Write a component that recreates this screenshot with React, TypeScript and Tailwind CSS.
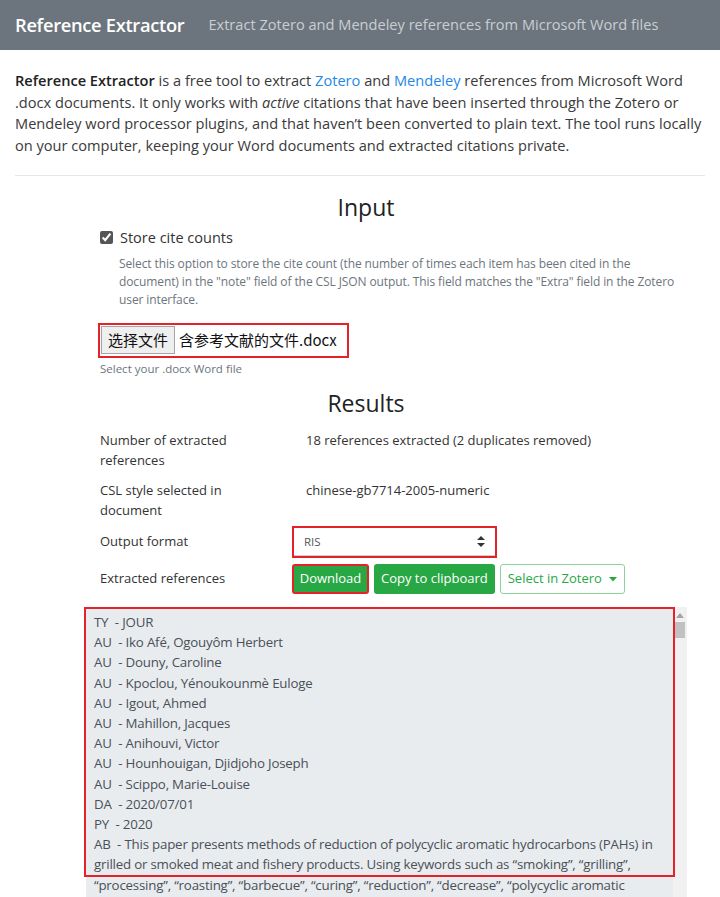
import React from "react";

const ris = [
  "TY  - JOUR",
  "AU  - Iko Afé, Ogouyôm Herbert",
  "AU  - Douny, Caroline",
  "AU  - Kpoclou, Yénoukounmè Euloge",
  "AU  - Igout, Ahmed",
  "AU  - Mahillon, Jacques",
  "AU  - Anihouvi, Victor",
  "AU  - Hounhouigan, Djidjoho Joseph",
  "AU  - Scippo, Marie-Louise",
  "DA  - 2020/07/01",
  "PY  - 2020",
  "AB  - This paper presents methods of reduction of polycyclic aromatic hydrocarbons (PAHs) in grilled or smoked meat and fishery products. Using keywords such as “smoking”, “grilling”, “processing”, “roasting”, “barbecue”, “curing”, “reduction”, “decrease”, “polycyclic aromatic hydrocarbons”, a literature search was performed.",
];

const Row: React.FC<{ label: string; children: React.ReactNode }> = ({ label, children }) => (
  <div className="flex items-start">
    <div className="w-[192px] shrink-0">
      <div className="max-w-[150px] text-[13px] leading-[20px] text-[#333]">{label}</div>
    </div>
    <div className="flex-1">{children}</div>
  </div>
);

export default function App() {
  return (
    <div className="min-h-screen bg-white font-['Open_Sans',sans-serif] text-[#212529]">
      <header className="h-[50px] bg-[#6c757d] flex items-center px-[15px]">
        <span className="text-white text-[18.3px] font-semibold tracking-[-0.3px]">Reference Extractor</span>
        <span className="ml-[24px] text-[#c9ced3] text-[14.6px]">
          Extract Zotero and Mendeley references from Microsoft Word files
        </span>
      </header>

      <main className="px-[15px]">
        <p className="pt-[20px] -mr-[10px] text-[14.6px] leading-[21.5px] text-[#3a3a3a]">
          <b className="font-semibold text-[#222]">Reference Extractor</b> is a free tool to extract{" "}
          <span className="text-[#1e88e5]">Zotero</span> and <span className="text-[#1e88e5]">Mendeley</span> references
          from Microsoft Word .docx documents. It only works with <i>active</i> citations that have been inserted through
          the Zotero or Mendeley word processor plugins, and that haven’t been converted to plain text. The tool runs
          locally on your computer, keeping your Word documents and extracted citations private.
        </p>
        <hr className="mt-[19px] border-[#e6e6e6]" />

        <h2 className="mt-[16px] pl-[12px] text-center text-[23px] leading-[30px] text-[#222]">Input</h2>

        <div className="pl-[85px] pr-[15px] mt-[5px]">
          <label className="flex items-center gap-[7px] text-[14.5px] text-[#333]">
            <input type="checkbox" defaultChecked className="w-[13px] h-[13px] accent-[#555]" />
            Store cite counts
          </label>
          <p className="ml-[19px] mt-[6px] text-[12px] leading-[18px] text-[#6c757d] tracking-[-0.1px]">
            Select this option to store the cite count (the number of times each item has been cited in the document) in
            the "note" field of the CSL JSON output. This field matches the "Extra" field in the Zotero user interface.
          </p>

          <div className="mt-[14px] ml-[-2px] w-[251px] h-[35px] border-2 border-[#e5222a] flex items-center pl-[1px]">
            <span className="h-[28px] px-[6px] flex items-center bg-[#efefef] border border-[#a5a5a5] text-[15px] font-['Noto_Sans_CJK_SC',sans-serif] text-[#111]">
              选择文件
            </span>
            <span className="ml-[4px] text-[15px] font-['Noto_Sans_CJK_SC',sans-serif] text-[#111] whitespace-nowrap">含参考文献的文件.docx</span>
          </div>
          <div className="mt-[2px] text-[11.5px] text-[#6c757d]">Select your .docx Word file</div>
        </div>

        <h2 className="mt-[11px] pl-[12px] text-center text-[23px] leading-[30px] text-[#222]">Results</h2>

        <div className="pl-[85px] pr-[15px]">
          <div className="mt-[12px] flex flex-col gap-[10px]">
            <Row label="Number of extracted references">
              <div className="pl-[14px] text-[13px] leading-[20px] text-[#333]">18 references extracted (2 duplicates removed)</div>
            </Row>
            <Row label="CSL style selected in document">
              <div className="pl-[14px] text-[13px] leading-[20px] text-[#333]">chinese-gb7714-2005-numeric</div>
            </Row>
            <div className="flex items-center -mt-[4px]">
              <div className="w-[192px] shrink-0 text-[13px] text-[#333]">Output format</div>
              <div className="w-[205px] h-[32px] border-2 border-[#e5222a] flex">
                <div className="flex-1 flex items-center justify-between px-[10px] border-b border-[#ccc] bg-white">
                  <span className="text-[11.5px] text-[#555]">RIS</span>
                  <svg width="8" height="11" viewBox="0 0 8 11">
                    <path d="M4 0 L8 4 L0 4 Z M4 11 L8 7 L0 7 Z" fill="#333" />
                  </svg>
                </div>
              </div>
            </div>
            <div className="flex items-center -mt-[4px]">
              <div className="w-[192px] shrink-0 text-[13px] text-[#333]">Extracted references</div>
              <div className="flex gap-[5px]">
                <button className="h-[30px] w-[77px] rounded-[3px] bg-[#28a745] border-2 border-[#e5222a] text-white text-[13px]">
                  Download
                </button>
                <button className="h-[30px] px-[7px] rounded-[3px] bg-[#28a745] text-white text-[13px]">Copy to clipboard</button>
                <button className="h-[30px] px-[7px] rounded-[3px] border border-[#8fd19e] text-[#28a745] text-[13px] flex items-center gap-[7px]">
                  Select in Zotero
                  <svg width="8" height="5" viewBox="0 0 8 5">
                    <path d="M0 0 L8 0 L4 4.5 Z" fill="#28a745" />
                  </svg>
                </button>
              </div>
            </div>
          </div>
        </div>

        <div className="relative mt-[13px] ml-[71px] w-[601px] h-[300px] flex">
          <div className="flex-1 bg-[#e9ecef] overflow-hidden pl-[8px] pr-[10px] pt-[5px] text-[13.3px] leading-[20.2px] text-[#4a5057] tracking-[-0.2px]">
            {ris.map((l, i) => (
              <div key={i} className="whitespace-pre-wrap">{l}</div>
            ))}
          </div>
          <div className="w-[14px] bg-[#f1f1f1] flex flex-col items-center">
            <svg width="8" height="6" viewBox="0 0 8 6" className="mt-[6px]">
              <path d="M0 5 L8 5 L4 0 Z" fill="#a3a3a3" />
            </svg>
            <div className="mt-[3px] w-[10px] h-[16px] bg-[#c1c1c1]" />
          </div>
          <div className="absolute left-[-2px] top-0 w-[591px] h-[270px] border-2 border-[#e5222a] pointer-events-none" />
        </div>
      </main>
    </div>
  );
}
